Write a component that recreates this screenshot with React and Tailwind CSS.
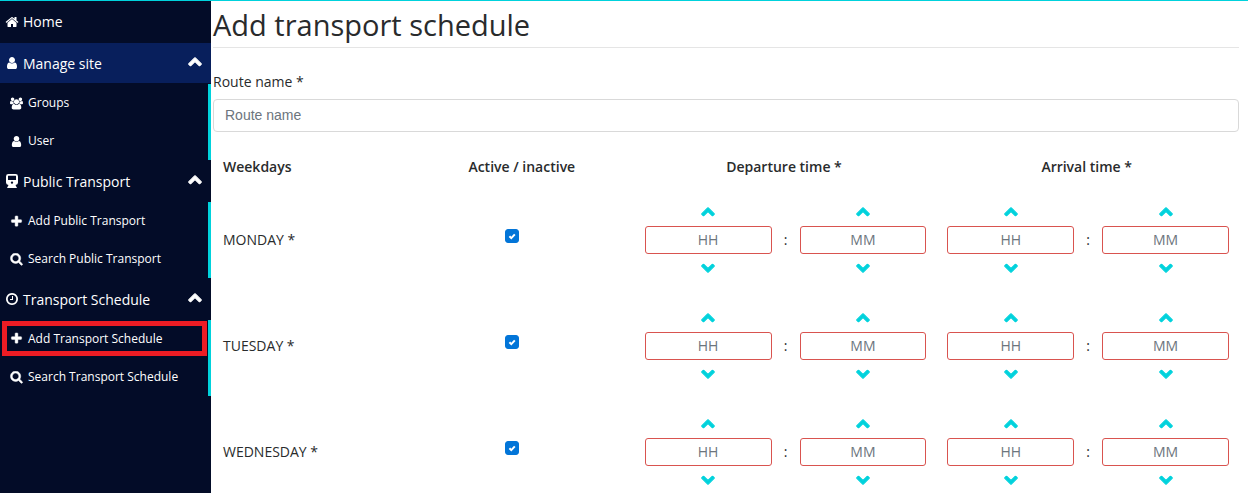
import { useId } from "react";

const ICONS = {
  home: "M1472 992v480q0 26-19 45t-45 19h-384v-384h-256v384h-384q-26 0-45-19t-19-45v-480q0-1 .5-3t.5-3l575-474 575 474q1 2 1 6zm223-69l-62 74q-8 9-21 11h-3q-13 0-21-7l-692-577-692 577q-12 8-24 7-13-2-21-11l-62-74q-8-10-7-23.5t11-21.5l719-599q32-26 76-26t76 26l244 204v-195q0-14 9-23t23-9h192q14 0 23 9t9 23v408l219 182q10 8 11 21.5t-7 23.5z",
  user: "M1536 1399q0 109-62.5 187t-150.5 78h-854q-88 0-150.5-78t-62.5-187q0-85 8.5-160.5t31.5-152 58.5-131 94-89 134.5-34.5q131 128 313 128t313-128q76 0 134.5 34.5t94 89 58.5 131 31.5 152 8.5 160.5zm-256-887q0 159-112.5 271.5t-271.5 112.5-271.5-112.5-112.5-271.5 112.5-271.5 271.5-112.5 271.5 112.5 112.5 271.5z",
  users: "M529 896q-162 5-265 128h-134q-82 0-138-40.5t-56-118.5q0-353 124-353 6 0 43.5 21t97.5 42.5 119 21.5q67 0 133-23-5 37-5 66 0 139 81 256zm1071 637q0 120-73 189.5t-194 69.5h-874q-121 0-194-69.5t-73-189.5q0-53 3.5-103.5t14-109 26.5-108.5 43-97.5 62-81 85.5-53.5 111.5-20q10 0 43 21.5t73 48 107 48 135 21.5 135-21.5 107-48 73-48 43-21.5q61 0 111.5 20t85.5 53.5 62 81 43 97.5 26.5 108.5 14 109 3.5 103.5zm-1024-1277q0 106-75 181t-181 75-181-75-75-181 75-181 181-75 181 75 75 181zm704 384q0 159-112.5 271.5t-271.5 112.5-271.5-112.5-112.5-271.5 112.5-271.5 271.5-112.5 271.5 112.5 112.5 271.5zm576 225q0 78-56 118.5t-138 40.5h-134q-103-123-265-128 81-117 81-256 0-29-5-66 66 23 133 23 59 0 119-21.5t97.5-42.5 43.5-21q124 0 124 353zm-128-609q0 106-75 181t-181 75-181-75-75-181 75-181 181-75 181 75 75 181z",
  train: "M2.500 0h7a2.500 2.400 0 0 1 2.500 2.400v6.200a2.500 2.400 0 0 1-2.500 2.400l1.500 3H1l1.500-3A2.500 2.400 0 0 1 0 8.600V2.400A2.500 2.400 0 0 1 2.500 0zM2.300 1.700a.3.3 0 0 0-.3.3v3.700a.3.3 0 0 0 .3.3h7.400a.3.3 0 0 0 .3-.3V2a.3.3 0 0 0-.3-.3zM6 7.400a1.200 1.200 0 1 0 0 2.400 1.200 1.200 0 1 0 0-2.400z",
  plus: "M1600 736v192q0 40-28 68t-68 28h-416v416q0 40-28 68t-68 28h-192q-40 0-68-28t-28-68v-416h-416q-40 0-68-28t-28-68v-192q0-40 28-68t68-28h416v-416q0-40 28-68t68-28h192q40 0 68 28t28 68v416h416q40 0 68 28t28 68z",
  search: "M1216 832q0-185-131.5-316.5t-316.5-131.5-316.5 131.5-131.5 316.5 131.5 316.5 316.5 131.5 316.5-131.5 131.5-316.5zm512 832q0 52-38 90t-90 38q-54 0-90-38l-343-342q-179 124-399 124-143 0-273.5-55.5t-225-150-150-225-55.5-273.5 55.5-273.5 150-225 225-150 273.5-55.5 273.5 55.5 225 150 150 225 55.5 273.5q0 220-124 399l343 343q37 37 37 90z",
  clock: "M1024 544v448q0 14-9 23t-23 9h-320q-14 0-23-9t-9-23v-64q0-14 9-23t23-9h224v-352q0-14 9-23t23-9h64q14 0 23 9t9 23zm416 352q0-148-73-273t-198-198-273-73-273 73-198 198-73 273 73 273 198 198 273 73 273-73 198-198 73-273zm224 0q0 209-103 385.5t-279.5 279.5-385.500 103-385.500-103-279.500-279.500-103-385.500 103-385.500 279.500-279.500 385.500-103 385.500 103 279.500 279.500 103 385.500z",
  up: "M1683 1331l-166 165q-19 19-45 19t-45-19l-531-531-531 531q-19 19-45 19t-45-19l-166-165q-19-19-19-45.5t19-45.5l742-741q19-19 45-19t45 19l742 741q19 19 19 45.5t-19 45.5z",
  down: "M1683 808l-742 741q-19 19-45 19t-45-19l-742-741q-19-19-19-45.5t19-45.5l166-165q19-19 45-19t45 19l531 531 531-531q19-19 45-19t45 19l166 165q19 19 19 45.5t-19 45.5z",
};

const VIEW_BOXES = {
  users: "-64 0 1920 1792",
  train: "-1 0 14 14",
  search: "0 100 1792 1792",
};

// Extra outline, in path units, for the glyphs that should read as bold.
const OUTLINES = { up: 130, down: 130, search: 70, plus: 60 };

function Icon({ name, className }) {
  return (
    <svg
      viewBox={VIEW_BOXES[name] ?? "0 0 1792 1792"}
      fill="currentColor"
      fillRule={name === "train" ? "evenodd" : "nonzero"}
      stroke={OUTLINES[name] ? "currentColor" : "none"}
      strokeWidth={OUTLINES[name] ?? 0}
      aria-hidden="true"
      className={className}
    >
      <path d={ICONS[name]} />
    </svg>
  );
}

const SECTIONS = [
  {
    title: "Manage site",
    icon: "user",
    current: true,
    items: [
      { label: "Groups", icon: "users" },
      { label: "User", icon: "user" },
    ],
  },
  {
    title: "Public Transport",
    icon: "train",
    items: [
      { label: "Add Public Transport", icon: "plus" },
      { label: "Search Public Transport", icon: "search" },
    ],
  },
  {
    title: "Transport Schedule",
    icon: "clock",
    items: [
      { label: "Add Transport Schedule", icon: "plus", highlighted: true },
      { label: "Search Transport Schedule", icon: "search" },
    ],
  },
];

function Sidebar() {
  return (
    <nav className="w-[211px] shrink-0 bg-[#030c28] text-white">
      <a href="#home" className="flex h-[41px] items-center gap-1 pl-[5px]">
        <Icon name="home" className="size-[14px]" />
        Home
      </a>
      {SECTIONS.map((section) => (
        <section key={section.title} className="pt-px">
          <button
            type="button"
            className={`mb-px flex h-10 w-full items-center gap-1 pl-[5px] pr-[9px] text-left ${section.current ? "bg-[#081f5c]" : ""}`}
          >
            <Icon name={section.icon} className="size-[14px]" />
            <span className="flex-1">{section.title}</span>
            <Icon name="up" className="mb-1 size-[14px]" />
          </button>
          <ul className="border-r-3 border-[#00d2dc]">
            {section.items.map((item) => (
              <li key={item.label} className="flex h-[38px]">
                <a
                  href="#item"
                  className={`flex flex-1 items-center gap-[5px] text-[12px] ${item.highlighted ? "ml-[2px] mr-px mt-px mb-[2px] border-5 border-[#ed1c24] pl-[3px]" : "pl-[10px]"}`}
                >
                  <Icon name={item.icon} className="size-[13px]" />
                  {item.label}
                </a>
              </li>
            ))}
          </ul>
        </section>
      ))}
    </nav>
  );
}

function Stepper({ placeholder, label }) {
  return (
    <div className="flex min-w-0 flex-1 flex-col items-center">
      <button type="button" aria-label={`Increase ${label}`} className="flex h-7 w-10 items-center justify-center pb-[2px] text-[#00d2dc]">
        <Icon name="up" className="size-[14px]" />
      </button>
      <input
        type="text"
        aria-label={label}
        placeholder={placeholder}
        className="h-7 w-full rounded-[3px] border border-[#d9534f] bg-white pb-[2px] text-center placeholder:text-[#6c757d]"
      />
      <button type="button" aria-label={`Decrease ${label}`} className="flex h-7 w-10 items-center justify-center pb-[2px] text-[#00d2dc]">
        <Icon name="down" className="size-[14px]" />
      </button>
    </div>
  );
}

function TimePicker({ label }) {
  return (
    <div className="flex items-center">
      <Stepper placeholder="HH" label={`${label} hours`} />
      <span className="w-7 pb-[2px] text-center">:</span>
      <Stepper placeholder="MM" label={`${label} minutes`} />
    </div>
  );
}

function DayRow({ day }) {
  const id = useId();
  return (
    <tr className="h-[106px]">
      <td className="px-[10px] pb-[2px]">
        <label htmlFor={id}>{day} *</label>
      </td>
      <td className="pl-[2px]">
        <div className="flex justify-center pb-2 pr-5">
          <span className="relative flex size-[14px]">
            <input id={id} type="checkbox" defaultChecked className="peer size-[14px] appearance-none rounded-[3px] border border-[#0275d8] checked:bg-[#0275d8]" />
            <svg viewBox="0 0 14 14" aria-hidden="true" className="pointer-events-none absolute inset-0 hidden peer-checked:block">
              <path d="M4.4 7.200l1.900 1.900 3.500-3.700" fill="none" stroke="#fff" strokeWidth="2" />
            </svg>
          </span>
        </div>
      </td>
      <td className="pl-[11px] pr-[10px]">
        <TimePicker label={`${day} departure`} />
      </td>
      <td className="pl-[11px] pr-[10px]">
        <TimePicker label={`${day} arrival`} />
      </td>
    </tr>
  );
}

export default function App() {
  return (
    <div className="flex h-screen overflow-hidden border-t border-[#00d2dc] bg-white font-['Open_Sans',sans-serif] text-[14px] text-[#292b2c]">
      <Sidebar />
      <main className="min-w-0 flex-1 pl-[2px] pr-[9px]">
        <h1 className="border-b border-[#e5e5e5] pt-[5px] pb-[3px] text-[29px] leading-[38px] font-normal">Add transport schedule</h1>
        <form className="pt-6">
          <label htmlFor="route" className="block leading-5">Route name *</label>
          <input
            id="route"
            type="text"
            placeholder="Route name"
            className="mt-[7px] h-[33px] w-full rounded-[4px] border border-[#d9d9d9] px-[11px] pb-[2px] font-['Liberation_Sans',sans-serif] placeholder:text-[#6c757d]"
          />
          <table className="mt-4 w-full table-fixed border-collapse">
            <thead>
              <tr className="h-[39px] align-top leading-[38px]">
                <th className="w-[19%] px-[10px] text-left font-semibold">Weekdays</th>
                <th className="w-[22%] pl-[2px] font-semibold">Active / inactive</th>
                <th className="pr-[2px] font-semibold">Departure time *</th>
                <th className="pr-[2px] font-semibold">Arrival time *</th>
              </tr>
            </thead>
            <tbody>
              <DayRow day="MONDAY" />
              <DayRow day="TUESDAY" />
              <DayRow day="WEDNESDAY" />
            </tbody>
          </table>
        </form>
      </main>
    </div>
  );
}
